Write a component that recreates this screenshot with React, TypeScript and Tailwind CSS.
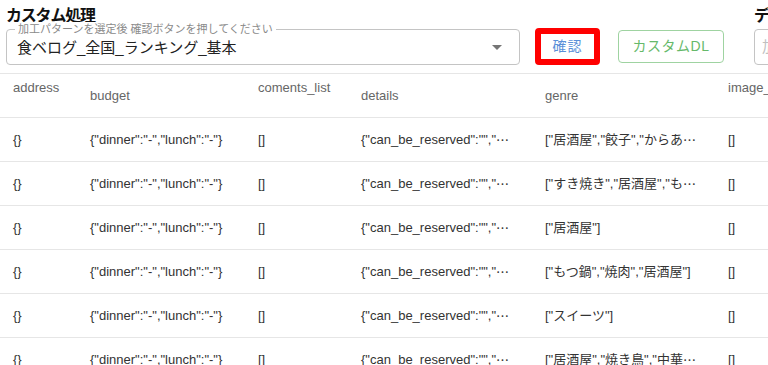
import React from 'react';

const cols = [
  { key: 'address', w: 'w-[77px]', raised: true },
  { key: 'budget', w: 'w-[168px]', raised: false },
  { key: 'coments_list', w: 'w-[103px]', raised: true },
  { key: 'details', w: 'w-[184px]', raised: false },
  { key: 'genre', w: 'w-[183px]', raised: false },
  { key: 'image_url', w: 'w-[120px]', raised: true },
];

const genres = [
  '["居酒屋","餃子","からあ…',
  '["すき焼き","居酒屋","も…',
  '["居酒屋"]',
  '["もつ鍋","焼肉","居酒屋"]',
  '["スイーツ"]',
  '["居酒屋","焼き鳥","中華…',
];

const rows = genres.map((g) => ({
  address: '{}',
  budget: '{"dinner":"-","lunch":"-"}',
  coments_list: '[]',
  details: '{"can_be_reserved":"","…',
  genre: g,
  image_url: '[]',
}));

// 省略記号は中央寄せの和文フォントで表示
const Cell = ({ text }: { text: string }) => {
  if (!text.endsWith('…')) return <>{text}</>;
  return (
    <>
      {text.slice(0, -1)}
      <span style={{ fontFamily: '"Noto Sans CJK JP", sans-serif' }}>…</span>
    </>
  );
};

export default function App() {
  return (
    <div
      className="w-[768px] h-[365px] overflow-hidden bg-white text-[#222]"
      style={{ fontFamily: '"Liberation Sans", "Noto Sans CJK JP", sans-serif' }}
    >
      {/* 上部: 加工パターン選択 */}
      <div className="flex items-start pl-[6px] h-[74px] border-b border-[#e6e6e6] whitespace-nowrap">
        <div className="w-[514px] shrink-0">
          <h2 className="text-[16px] tracking-[-1.2px] font-bold leading-[22px] pt-[5px] text-[#111]">カスタム処理</h2>
          <div className="relative mt-[2px] h-[36px] rounded-[4px] border border-[#c4c4c4] flex items-center pl-[10px] pr-[10px]">
            <span className="absolute left-[8px] -top-[8px] bg-white px-[3px] text-[11px] leading-[14px] text-[#8a8a8a]">
              加工パターンを選定後 確認ボタンを押してください
            </span>
            <span className="flex-1 text-[15px] text-[#222] pt-[2px]">食ベログ_全国_ランキング_基本</span>
            <svg width="24" height="24" viewBox="0 0 24 24" className="text-[#757575]">
              <path d="M7 10l5 5 5-5z" fill="currentColor" />
            </svg>
          </div>
        </div>

        <div className="ml-[15px] mt-[28px] w-[65px] h-[37px] shrink-0 rounded-[4px] border-[6px] border-[#ff0000] bg-white flex items-center justify-center">
          <span className="text-[14px] tracking-[1px] text-[#5a8fd8]">確認</span>
        </div>

        <button className="ml-[18px] mt-[30px] w-[106px] h-[33px] shrink-0 rounded-[4px] border border-[#9fd3a1] flex items-center justify-center text-[14px] tracking-[0.5px] text-[#66b96a]">
          カスタムDL
        </button>

        <div className="ml-[30px] w-[300px] shrink-0">
          <h2 className="text-[16px] tracking-[-1.2px] font-bold leading-[22px] pt-[5px] text-[#111]">データ出力</h2>
          <div className="mt-[2px] h-[36px] rounded-[4px] border border-[#c4c4c4] flex items-center pl-[7px]">
            <span className="text-[15px] text-[#c0c0c0]">加工パターン</span>
          </div>
        </div>
      </div>

      {/* テーブル */}
      <div className="text-[13px] whitespace-nowrap">
        <div className="flex h-[44px] border-b border-[#e6e6e6]">
          {cols.map((c) => (
            <div
              key={c.key}
              className={`${c.w} shrink-0 px-[13px] flex items-center text-[#666] ${c.raised ? 'pb-[16px]' : ''}`}
            >
              {c.key === 'image_url' ? 'image_' : c.key}
            </div>
          ))}
        </div>
        {rows.map((r, i) => (
          <div key={i} className="flex h-[44px] border-b border-[#e6e6e6] text-[#333]">
            {cols.map((c) => (
              <div key={c.key} className={`${c.w} shrink-0 px-[13px] flex items-center overflow-hidden`}>
                <Cell text={(r as any)[c.key]} />
              </div>
            ))}
          </div>
        ))}
      </div>
    </div>
  );
}
